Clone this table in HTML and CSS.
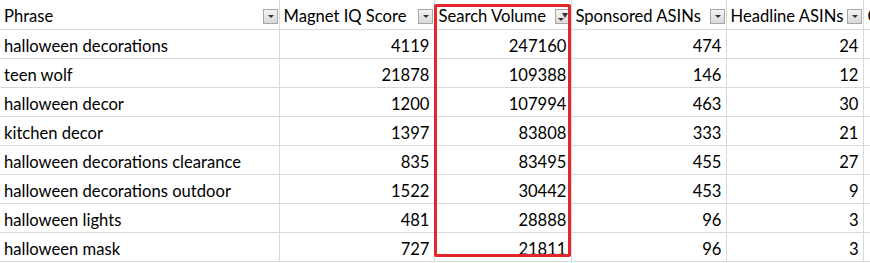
FILE: index.html
```html
<!DOCTYPE html>
<html lang="en">
<head>
  <meta charset="UTF-8" />
  <title>Keyword sheet</title>
  <link rel="stylesheet" href="styles.css">
</head>
<body>
  <div class="sheet">
    <table class="grid">
      <colgroup>
        <col class="c-phrase">
        <col class="c-num">
        <col class="c-narrow">
        <col class="c-num">
        <col class="c-narrow">
        <col class="c-rest">
      </colgroup>
      <thead>
        <tr>
          <th><span class="label">Phrase</span><span class="filter"></span></th>
          <th><span class="label">Magnet IQ Score</span><span class="filter"></span></th>
          <th><span class="label">Search Volume</span><span class="filter active"></span></th>
          <th><span class="label">Sponsored ASINs</span><span class="filter"></span></th>
          <th><span class="label">Headline ASINs</span><span class="filter"></span></th>
          <th><span class="label">Competing Products</span></th>
        </tr>
      </thead>
      <tbody>
        <tr><td>halloween decorations</td><td>4119</td><td>247160</td><td>474</td><td>24</td><td></td></tr>
        <tr><td>teen wolf</td><td>21878</td><td>109388</td><td>146</td><td>12</td><td></td></tr>
        <tr><td>halloween decor</td><td>1200</td><td>107994</td><td>463</td><td>30</td><td></td></tr>
        <tr><td>kitchen decor</td><td>1397</td><td>83808</td><td>333</td><td>21</td><td></td></tr>
        <tr><td>halloween decorations clearance</td><td>835</td><td>83495</td><td>455</td><td>27</td><td></td></tr>
        <tr><td>halloween decorations outdoor</td><td>1522</td><td>30442</td><td>453</td><td>9</td><td></td></tr>
        <tr><td>halloween lights</td><td>481</td><td>28888</td><td>96</td><td>3</td><td></td></tr>
        <tr><td>halloween mask</td><td>727</td><td>21811</td><td>96</td><td>3</td><td></td></tr>
      </tbody>
    </table>
    <div class="highlight"></div>
  </div>
</body>
</html>
```

FILE: styles.css
```css
* {
  margin: 0;
  padding: 0;
  box-sizing: border-box;
}

body {
  background: #fff;
  font-family: Lato, 'Noto Sans', sans-serif;
  font-size: 16.6px;
  color: #000;
  overflow: hidden;
}

.sheet {
  position: relative;
  width: 870px;
  height: 263px;
  overflow: hidden;
}

.grid {
  border-collapse: collapse;
  table-layout: fixed;
  width: 1000px;
}

.c-phrase { width: 279px; }
.c-num { width: 155px; }
.c-narrow { width: 137px; }
.c-rest { width: 137px; }

.grid th,
.grid td {
  height: 29px;
  border-right: 1px solid #d9d9d9;
  border-bottom: 1px solid #d9d9d9;
  padding: 4px 4px 0 4px;
  white-space: nowrap;
  overflow: hidden;
  vertical-align: middle;
  line-height: 22px;
}

.grid th {
  font-weight: normal;
  text-align: left;
}

.grid th .label {
  float: left;
}

.grid td {
  text-align: right;
}

.grid td:first-child {
  text-align: left;
}

.filter {
  float: right;
  position: relative;
  width: 15px;
  height: 15px;
  margin-top: 4px;
  margin-right: -3px;
  border: 1px solid #a6a6a6;
  background: linear-gradient(#f4f4f4, #d9d9d9);
}

.filter::after {
  content: "";
  position: absolute;
  left: 4px;
  top: 5px;
  border-left: 3px solid transparent;
  border-right: 3px solid transparent;
  border-top: 3px solid #333;
}

.filter.active::after {
  left: 2px;
  top: 8px;
}

.filter.active::before {
  content: "";
  position: absolute;
  left: 6px;
  top: 3px;
  border-left: 3px solid transparent;
  border-right: 3px solid transparent;
  border-top: 5px solid #333;
}

.highlight {
  position: absolute;
  left: 434px;
  top: 4px;
  width: 137px;
  height: 253px;
  border: 3px solid #e3262b;
  border-radius: 2px;
}
```
